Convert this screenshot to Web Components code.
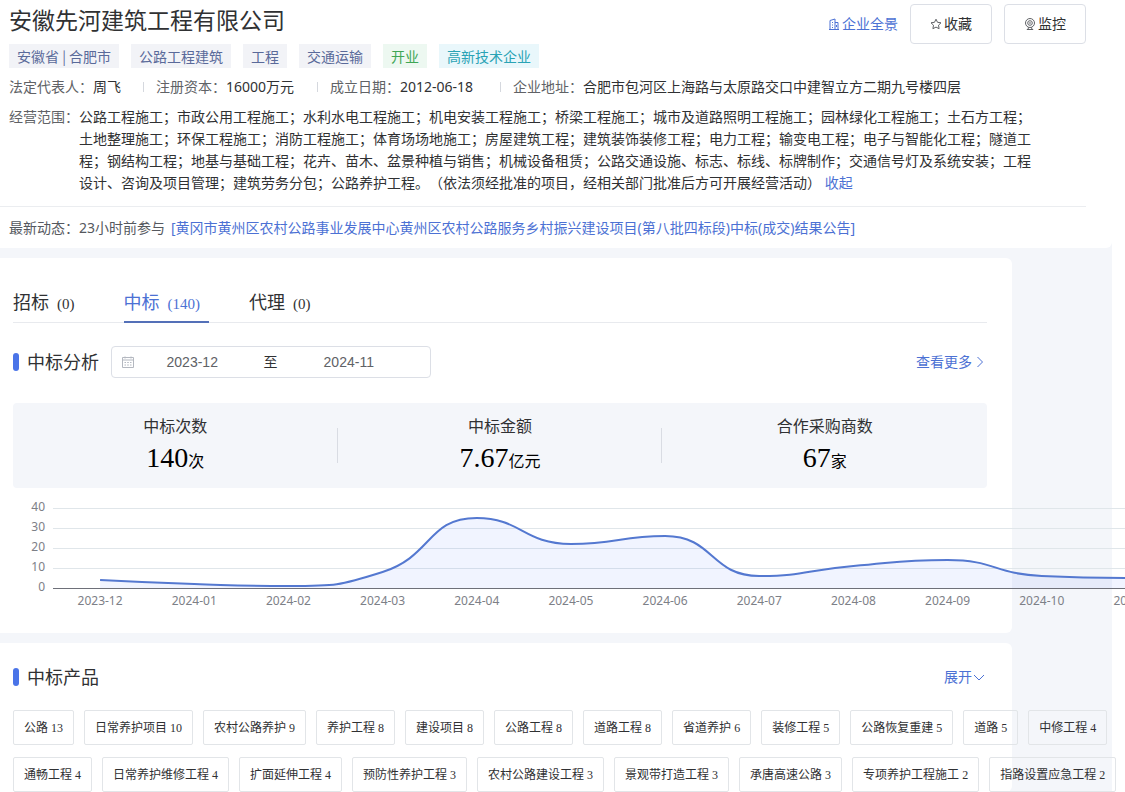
<!DOCTYPE html>
<html lang="zh-CN">
<head>
  <meta charset="utf-8">
  <title>安徽先河建筑工程有限公司</title>
  <style>
    body {
      margin: 0;
      background: #fff;
      color: #303133;
      font: 14px/22px "Noto Sans", "Noto Sans CJK SC", sans-serif;
      text-spacing-trim: space-all;
      overflow-x: hidden;
    }
  </style>
</head>

<body>
  <company-page></company-page>

  <template id="company-page">
    <style>
      :host {
        display: block;
        margin-right: 13px;
        min-height: 100vh;
        background: #f4f6fa;
      }

      main {
        display: flex;
        flex-direction: column;
        gap: 10px;
      }

      a {
        color: #4c71d4;
        text-decoration: none;
      }

      .tabs {
        display: flex;
        gap: 40px;
        box-shadow: inset 0 -1px #e8eaee;
      }

      .analysis {
        margin-top: 23px;
      }

      .stats {
        display: grid;
        grid-template-columns: repeat(3, 1fr);
        margin-top: 25px;
        background: #f4f6fa;
        border-radius: 4px;
      }

      /* the product list runs past the right side of its card */
      .products {
        display: flex;
        flex-wrap: wrap;
        gap: 12px 10px;
        margin: 17px -133px 0 0;
      }
    </style>
    <main>
      <company-header name="安徽先河建筑工程有限公司">
        <a slot="actions" href="#"><ui-icon name="building"></ui-icon>企业全景</a>
        <action-button slot="actions" icon="star">收藏</action-button>
        <action-button slot="actions" icon="monitor">监控</action-button>

        <tag-chip slot="tags">安徽省 | 合肥市</tag-chip>
        <tag-chip slot="tags">公路工程建筑</tag-chip>
        <tag-chip slot="tags">工程</tag-chip>
        <tag-chip slot="tags">交通运输</tag-chip>
        <tag-chip slot="tags" type="success">开业</tag-chip>
        <tag-chip slot="tags" type="info">高新技术企业</tag-chip>

        <info-item slot="info" label="法定代表人：">周飞</info-item>
        <info-item slot="info" label="注册资本：">16000万元</info-item>
        <info-item slot="info" label="成立日期：">2012-06-18</info-item>
        <info-item slot="info" label="企业地址：">合肥市包河区上海路与太原路交口中建智立方二期九号楼四层</info-item>

        <info-item slot="scope" label="经营范围：">公路工程施工；市政公用工程施工；水利水电工程施工；机电安装工程施工；桥梁工程施工；城市及道路照明工程施工；园林绿化工程施工；土石方工程；土地整理施工；环保工程施工；消防工程施工；体育场场地施工；房屋建筑工程；建筑装饰装修工程；电力工程；输变电工程；电子与智能化工程；隧道工程；钢结构工程；地基与基础工程；花卉、苗木、盆景种植与销售；机械设备租赁；公路交通设施、标志、标线、标牌制作；交通信号灯及系统安装；工程设计、咨询及项目管理；建筑劳务分包；公路养护工程。（依法须经批准的项目，经相关部门批准后方可开展经营活动） <a href="#">收起</a></info-item>

        <span slot="news">最新动态：23小时前参与</span>
        <a slot="news" href="#">[黄冈市黄州区农村公路事业发展中心黄州区农村公路服务乡村振兴建设项目(第八批四标段)中标(成交)结果公告]</a>
      </company-header>

      <content-card>
        <nav class="tabs">
          <tab-item count="0">招标</tab-item>
          <tab-item count="140" active>中标</tab-item>
          <tab-item count="0">代理</tab-item>
        </nav>
        <section-title class="analysis" label="中标分析">
          <date-range start="2023-12" end="2024-11"></date-range>
          <a slot="more" href="#">查看更多<ui-icon name="right"></ui-icon></a>
        </section-title>
        <div class="stats">
          <stat-item label="中标次数" value="140" unit="次"></stat-item>
          <stat-item label="中标金额" value="7.67" unit="亿元"></stat-item>
          <stat-item label="合作采购商数" value="67" unit="家"></stat-item>
        </div>
        <line-chart start="2023-12" values="[4, 2, 1, 8, 35, 22, 26, 6, 11, 14, 6, 5]"></line-chart>
      </content-card>

      <content-card compact>
        <section-title label="中标产品">
          <a slot="more" href="#">展开<ui-icon name="down"></ui-icon></a>
        </section-title>
        <div class="products">
          <product-tag count="13">公路</product-tag>
          <product-tag count="10">日常养护项目</product-tag>
          <product-tag count="9">农村公路养护</product-tag>
          <product-tag count="8">养护工程</product-tag>
          <product-tag count="8">建设项目</product-tag>
          <product-tag count="8">公路工程</product-tag>
          <product-tag count="8">道路工程</product-tag>
          <product-tag count="6">省道养护</product-tag>
          <product-tag count="5">装修工程</product-tag>
          <product-tag count="5">公路恢复重建</product-tag>
          <product-tag count="5">道路</product-tag>
          <product-tag count="4">中修工程</product-tag>
          <product-tag count="4">通畅工程</product-tag>
          <product-tag count="4">日常养护维修工程</product-tag>
          <product-tag count="4">扩面延伸工程</product-tag>
          <product-tag count="3">预防性养护工程</product-tag>
          <product-tag count="3">农村公路建设工程</product-tag>
          <product-tag count="3">景观带打造工程</product-tag>
          <product-tag count="3">承唐高速公路</product-tag>
          <product-tag count="2">专项养护工程施工</product-tag>
          <product-tag count="2">指路设置应急工程</product-tag>
        </div>
      </content-card>
    </main>
  </template>

  <template id="company-header">
    <style>
      :host {
        display: block;
        padding: 4px 26px 9px 0;
        background: #fff;
        border-radius: 0 0 6px 0;
      }

      .top,
      .tags,
      .info,
      .scope,
      .news {
        padding-left: 9px;
      }

      .top {
        display: flex;
        justify-content: space-between;
        align-items: flex-start;
      }

      h1 {
        margin: 0;
        font-size: 23px;
        font-weight: 400;
        line-height: 32px;
      }

      .actions {
        display: flex;
        align-items: center;
        gap: 12px;
      }

      .tags {
        display: flex;
        gap: 12px;
      }

      .info {
        display: grid;
        grid-template-columns: 134px 161px 170px 1fr;
        column-gap: 13px;
        margin-top: 8px;
      }

      .scope {
        margin-top: 8px;
        padding-right: 50px;
      }

      .news {
        display: flex;
        gap: 6px;
        margin-top: 12px;
        padding-top: 10px;
        border-top: 1px solid #ebedf0;
        color: #55585e;
      }

      ::slotted(a) {
        display: flex;
        align-items: center;
        gap: 2px;
      }
    </style>
    <div class="top">
      <h1></h1>
      <div class="actions"><slot name="actions"></slot></div>
    </div>
    <div class="tags"><slot name="tags"></slot></div>
    <div class="info"><slot name="info"></slot></div>
    <div class="scope"><slot name="scope"></slot></div>
    <div class="news"><slot name="news"></slot></div>
  </template>

  <template id="action-button">
    <style>
      :host {
        display: block;
      }

      button {
        display: flex;
        align-items: center;
        justify-content: center;
        gap: 2px;
        width: 82px;
        height: 40px;
        padding: 0;
        border: 1px solid #dcdfe6;
        border-radius: 4px;
        background: #fff;
        color: #303133;
        font: inherit;
        cursor: pointer;
      }

      ui-icon {
        color: #606266;
      }
    </style>
    <button type="button"><ui-icon></ui-icon><slot></slot></button>
  </template>

  <template id="tag-chip">
    <style>
      :host {
        display: block;
        padding: 0 8px;
        background: #f2f3f7;
        color: #5a6a9a;
        font: 14px/24px "Noto Sans CJK SC", sans-serif;
      }

      :host([type="success"]) {
        background: #edf8f1;
        color: #3fa655;
      }

      :host([type="info"]) {
        background: #e9f7fb;
        color: #2aa3b5;
      }
    </style>
    <slot></slot>
  </template>

  <template id="info-item">
    <style>
      :host {
        display: flex;
        position: relative;
      }

      /* separator in front of every item but the first */
      :host([slot="info"]:not(:first-of-type))::before {
        content: "";
        position: absolute;
        left: -13px;
        top: 6px;
        height: 10px;
        border-left: 1px solid #d5d8de;
      }

      .label {
        flex: none;
        color: #606266;
      }
    </style>
    <span class="label"></span>
    <div><slot></slot></div>
  </template>

  <template id="content-card">
    <style>
      :host {
        display: block;
        margin-right: 100px;
        padding: 26px 25px 0 13px;
        background: #fff;
        border-radius: 0 6px 6px 0;
      }

      :host([compact]) {
        padding-top: 18px;
      }
    </style>
    <slot></slot>
  </template>

  <template id="tab-item">
    <style>
      :host {
        display: block;
      }

      button {
        display: block;
        padding: 0 9px 0 0;
        border: 0;
        border-bottom: 2px solid transparent;
        background: none;
        color: inherit;
        font: inherit;
        font-size: 18px;
        line-height: 37px;
        cursor: pointer;
      }

      .count {
        margin-left: 8px;
        font: 15px/20px "Liberation Serif", serif;
      }

      :host([active]) button {
        border-color: #5470b8;
        color: #4c71d4;
      }
    </style>
    <button type="button"><slot></slot><span class="count"></span></button>
  </template>

  <template id="section-title">
    <style>
      :host {
        display: flex;
        align-items: center;
        height: 32px;
        padding-right: 2px;
      }

      h2 {
        display: flex;
        align-items: center;
        gap: 8px;
        margin: 0 12px 0 0;
        font-size: 18px;
        font-weight: 400;
        line-height: 32px;
      }

      h2::before {
        content: "";
        width: 6px;
        height: 18px;
        border-radius: 3px;
        background: #4a74e8;
      }

      .more {
        margin-left: auto;
      }

      ::slotted(a) {
        display: flex;
        align-items: center;
        gap: 1px;
      }
    </style>
    <h2></h2>
    <slot></slot>
    <div class="more"><slot name="more"></slot></div>
  </template>

  <template id="date-range">
    <style>
      :host {
        display: flex;
        align-items: center;
        box-sizing: border-box;
        width: 320px;
        height: 32px;
        padding: 0 23px 0 10px;
        border: 1px solid #dcdfe6;
        border-radius: 4px;
      }

      ui-icon {
        color: #b4b8c0;
      }

      input {
        flex: 1;
        min-width: 0;
        padding: 0;
        border: 0;
        outline: 0;
        background: none;
        color: #606266;
        font: 14px/20px "Liberation Sans", sans-serif;
        text-align: center;
      }

      span {
        width: 40px;
        text-align: center;
      }
    </style>
    <ui-icon name="calendar"></ui-icon>
    <input type="text" class="start" aria-label="开始月份">
    <span>至</span>
    <input type="text" class="end" aria-label="结束月份">
  </template>

  <template id="stat-item">
    <style>
      :host {
        display: block;
        position: relative;
        padding: 12px 0 9px;
        text-align: center;
      }

      :host(:not(:last-child))::after {
        content: "";
        position: absolute;
        right: 0;
        top: 25px;
        height: 35px;
        border-right: 1px solid #d9dce3;
      }

      .label {
        font-size: 16px;
      }

      .number {
        height: 42px;
        color: #000;
        font: 28px/42px "Liberation Serif", serif;
      }

      .unit {
        font: 16px/22px "Noto Sans CJK SC", sans-serif;
      }
    </style>
    <div class="label"></div>
    <div class="number"><span class="value"></span><span class="unit"></span></div>
  </template>

  <template id="line-chart">
    <style>
      :host {
        display: block;
      }

      svg {
        display: block;
        width: 100%;
        height: 145px;
        overflow: visible;
      }

      text {
        fill: #7d8087;
        font: 12px "Noto Sans", sans-serif;
      }

      .grid {
        stroke: #e0e6ea;
      }

      .axis {
        stroke: #6e7079;
      }

      .area {
        fill: #4c71ff;
        fill-opacity: 0.08;
      }

      .line {
        fill: none;
        stroke: #5478d0;
        stroke-width: 2;
      }
    </style>
    <svg></svg>
  </template>

  <template id="product-tag">
    <style>
      :host {
        display: block;
        padding: 2px 10px 0;
        border: 1px solid #e2e5e8;
        border-radius: 2px;
        font: 12px/31px "Liberation Serif", "Noto Sans CJK SC", sans-serif;
        white-space: nowrap;
      }
    </style>
    <slot></slot> <span class="count"></span>
  </template>

  <script>
    class BaseElement extends HTMLElement {

      constructor() {
        super();
        this.attachShadow({ mode: 'open' });
      }

      connectedCallback() {
        if (this.shadowRoot.childNodes.length > 0) {
          return;
        }
        var t = document.getElementById(this.localName);
        this.shadowRoot.appendChild(document.importNode(t.content, true));
        this.refresh();
      }

      find(selector) {
        return this.shadowRoot.querySelector(selector);
      }

      setText(selector, attr) {
        this.find(selector).textContent = this.getAttribute(attr);
      }

      refresh() {}
    }

    var ICONS = {
      building: '<path d="M1 11.5h10M2 11.5v-9l5-1.5v10.5M7 4.5h3v7M4 4.5h1M4 7h1M4 9.5h1M8.5 7v2"/>',
      star: '<path d="M6 1.2l1.5 3.1 3.5.5-2.5 2.4.6 3.5L6 9.1l-3.1 1.6.6-3.5L1 4.8l3.5-.5z"/>',
      monitor: '<circle cx="6" cy="5" r="4.5"/><circle cx="6" cy="5" r="2.3"/><circle cx="6" cy="5" r=".4"/><path d="M4.5 9.3l-.5 2.2M7.5 9.3l.5 2.2M2.8 11.5h6.4"/>',
      calendar: '<path d="M.5 1.5h11v10H.5zM.5 4h11M3 .5v2M9 .5v2M2.5 6.5h1.5M5.2 6.5h1.6M8 6.5h1.5M2.5 9h1.5M5.2 9h1.6M8 9h1.5"/>',
      right: '<path d="M4.5 1L9.5 6l-5 5"/>',
      down: '<path d="M1 4l5 5 5-5"/>'
    };

    class UiIcon extends HTMLElement {

      constructor() {
        super();
        this.attachShadow({ mode: 'open' });
      }

      static get observedAttributes() {
        return ['name'];
      }

      attributeChangedCallback(attr, oldValue, newValue) {
        this.shadowRoot.innerHTML = `
          <style>
            :host { display: block; flex: none; width: 12px; height: 12px; }
            svg { display: block; fill: none; stroke: currentColor; }
          </style>
          <svg width="12" height="12" viewBox="0 0 12 12" aria-hidden="true">${ICONS[newValue]}</svg>`;
      }
    }

    class CompanyPage extends BaseElement {}

    class CompanyHeader extends BaseElement {
      refresh() {
        this.setText('h1', 'name');
      }
    }

    class ActionButton extends BaseElement {
      refresh() {
        this.find('ui-icon').setAttribute('name', this.getAttribute('icon'));
      }
    }

    class TagChip extends BaseElement {}

    class InfoItem extends BaseElement {
      refresh() {
        this.setText('.label', 'label');
      }
    }

    class ContentCard extends BaseElement {}

    class TabItem extends BaseElement {
      refresh() {
        this.find('.count').textContent = '(' + this.getAttribute('count') + ')';
      }
    }

    class SectionTitle extends BaseElement {
      refresh() {
        this.setText('h2', 'label');
      }
    }

    class DateRange extends BaseElement {
      refresh() {
        this.find('.start').value = this.getAttribute('start');
        this.find('.end').value = this.getAttribute('end');
      }
    }

    class StatItem extends BaseElement {
      refresh() {
        this.setText('.label', 'label');
        this.setText('.value', 'value');
        this.setText('.unit', 'unit');
      }
    }

    class ProductTag extends BaseElement {
      refresh() {
        this.setText('.count', 'count');
      }
    }

    class LineChart extends BaseElement {

      get values() {
        return JSON.parse(this.getAttribute('values'));
      }

      // '2023-12', '2024-01', ... one label for each value
      get months() {
        var [year, month] = this.getAttribute('start').split('-').map(Number);
        return this.values.map((v, i) => {
          var m = month - 1 + i;
          return (year + Math.floor(m / 12)) + '-' + String(m % 12 + 1).padStart(2, '0');
        });
      }

      refresh() {
        var left = 40;
        var width = 1130;
        var bottom = 100;
        var step = width / this.values.length;
        var points = this.values.map((v, i) => [left + step * (i + 0.5), bottom - v * 2]);
        var line = this.curve(points);
        var last = points[points.length - 1];
        var html = '';

        for (var tick = 0; tick <= 40; tick += 10) {
          var y = bottom - tick * 2;
          if (tick > 0) {
            html += `<path class="grid" d="M${left} ${y + 0.5}h${width}"/>`;
          }
          html += `<text x="32" y="${y + 3}" text-anchor="end">${tick}</text>`;
        }
        html += `<path class="area" d="${line}L${last[0]} ${bottom}L${points[0][0]} ${bottom}z"/>`;
        html += `<path class="axis" d="M${left} ${bottom + 0.5}h${width}"/>`;
        html += `<path class="line" d="${line}"/>`;
        this.months.forEach((month, i) => {
          html += `<text x="${points[i][0]}" y="117" text-anchor="middle">${month}</text>`;
        });
        this.find('svg').innerHTML = html;
      }

      // smooth curve whose control points stay between neighbouring points
      curve(points) {
        var clamp = (v, a, b) => Math.max(Math.min(a, b), Math.min(Math.max(a, b), v));
        var d = 'M' + points[0];
        var out = points[0];

        for (var i = 1; i < points.length; i++) {
          var p = points[i - 1];
          var c = points[i];
          var n = points[i + 1];
          var into = c;
          var next = c;
          if (n) {
            var before = Math.hypot(c[0] - p[0], c[1] - p[1]);
            var after = Math.hypot(n[0] - c[0], n[1] - c[1]);
            var ratio = after / (after + before);
            next = [0, 1].map(k => clamp(c[k] + (n[k] - p[k]) * 0.5 * ratio, c[k], n[k]));
            into = [0, 1].map(k => clamp(c[k] - (next[k] - c[k]) * before / after, p[k], c[k]));
            next = [0, 1].map(k => c[k] + (c[k] - into[k]) * after / before);
          }
          d += 'C' + out + ' ' + into + ' ' + c;
          out = next;
        }
        return d;
      }
    }

    customElements.define('ui-icon', UiIcon);
    customElements.define('action-button', ActionButton);
    customElements.define('tag-chip', TagChip);
    customElements.define('info-item', InfoItem);
    customElements.define('content-card', ContentCard);
    customElements.define('tab-item', TabItem);
    customElements.define('section-title', SectionTitle);
    customElements.define('date-range', DateRange);
    customElements.define('stat-item', StatItem);
    customElements.define('line-chart', LineChart);
    customElements.define('product-tag', ProductTag);
    customElements.define('company-header', CompanyHeader);
    customElements.define('company-page', CompanyPage);
  </script>
</body>
</html>
